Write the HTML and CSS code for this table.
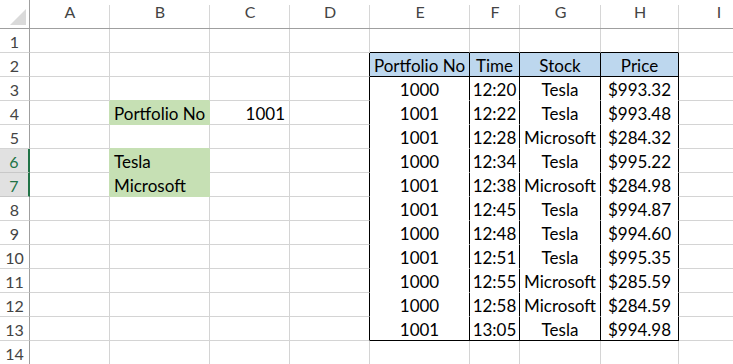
FILE: index.html
```html
<!DOCTYPE html>
<html>
<head>
<meta charset="utf-8">
<link rel="stylesheet" href="styles.css">
</head>
<body>
<div class="sheet">
  <div class="ch corner"><span class="tri"></span></div>
  <div class="ch">A</div><div class="ch">B</div><div class="ch">C</div><div class="ch">D</div><div class="ch">E</div><div class="ch">F</div><div class="ch">G</div><div class="ch">H</div><div class="ch">I</div>

  <div class="rh">1</div>
  <div class="c"></div><div class="c"></div><div class="c"></div><div class="c"></div><div class="c tb"></div><div class="c tb"></div><div class="c tb"></div><div class="c tb"></div><div class="c"></div>

  <div class="rh">2</div>
  <div class="c"></div><div class="c"></div><div class="c"></div><div class="c tl"></div><div class="c th">Portfolio No</div><div class="c th">Time</div><div class="c th">Stock</div><div class="c th">Price</div><div class="c"></div>

  <div class="rh">3</div>
  <div class="c"></div><div class="c gb"></div><div class="c"></div><div class="c tl"></div><div class="c td">1000</div><div class="c td">12:20</div><div class="c td">Tesla</div><div class="c td">$993.32</div><div class="c"></div>

  <div class="rh">4</div>
  <div class="c gr"></div><div class="c g">Portfolio No</div><div class="c num">1001</div><div class="c tl"></div><div class="c td">1001</div><div class="c td">12:22</div><div class="c td">Tesla</div><div class="c td">$993.48</div><div class="c"></div>

  <div class="rh">5</div>
  <div class="c"></div><div class="c gb"></div><div class="c"></div><div class="c tl"></div><div class="c td">1001</div><div class="c td">12:28</div><div class="c td">Microsoft</div><div class="c td">$284.32</div><div class="c"></div>

  <div class="rh sel">6</div>
  <div class="c gr"></div><div class="c g">Tesla</div><div class="c"></div><div class="c tl"></div><div class="c td">1000</div><div class="c td">12:34</div><div class="c td">Tesla</div><div class="c td">$995.22</div><div class="c"></div>

  <div class="rh sel">7</div>
  <div class="c gr"></div><div class="c g">Microsoft</div><div class="c"></div><div class="c tl"></div><div class="c td">1001</div><div class="c td">12:38</div><div class="c td">Microsoft</div><div class="c td">$284.98</div><div class="c"></div>

  <div class="rh">8</div>
  <div class="c"></div><div class="c"></div><div class="c"></div><div class="c tl"></div><div class="c td">1001</div><div class="c td">12:45</div><div class="c td">Tesla</div><div class="c td">$994.87</div><div class="c"></div>

  <div class="rh">9</div>
  <div class="c"></div><div class="c"></div><div class="c"></div><div class="c tl"></div><div class="c td">1000</div><div class="c td">12:48</div><div class="c td">Tesla</div><div class="c td">$994.60</div><div class="c"></div>

  <div class="rh">10</div>
  <div class="c"></div><div class="c"></div><div class="c"></div><div class="c tl"></div><div class="c td">1001</div><div class="c td">12:51</div><div class="c td">Tesla</div><div class="c td">$995.35</div><div class="c"></div>

  <div class="rh">11</div>
  <div class="c"></div><div class="c"></div><div class="c"></div><div class="c tl"></div><div class="c td">1000</div><div class="c td">12:55</div><div class="c td">Microsoft</div><div class="c td">$285.59</div><div class="c"></div>

  <div class="rh">12</div>
  <div class="c"></div><div class="c"></div><div class="c"></div><div class="c tl"></div><div class="c td">1000</div><div class="c td">12:58</div><div class="c td">Microsoft</div><div class="c td">$284.59</div><div class="c"></div>

  <div class="rh">13</div>
  <div class="c"></div><div class="c"></div><div class="c"></div><div class="c tl"></div><div class="c td last">1001</div><div class="c td last">13:05</div><div class="c td last">Tesla</div><div class="c td last">$994.98</div><div class="c"></div>

  <div class="rh">14</div>
  <div class="c"></div><div class="c"></div><div class="c"></div><div class="c"></div><div class="c"></div><div class="c"></div><div class="c"></div><div class="c"></div><div class="c"></div>
</div>
</body>
</html>
```

FILE: styles.css
```css
html, body {
  margin: 0;
  padding: 0;
  background: #ffffff;
  overflow: hidden;
}

.sheet {
  display: grid;
  grid-template-columns: 30px 80px 100px 80px 80px 100px 50px 81px 78px 80px;
  grid-template-rows: 29px repeat(14, 24px);
  width: 759px;
  font-family: "Lato", "Liberation Sans", sans-serif;
  font-size: 17px;
  color: #000000;
}

.ch {
  box-sizing: border-box;
  border-bottom: 1px solid #9f9f9f;
  background: linear-gradient(#d6d6d6, #d6d6d6) right bottom / 1px 23px no-repeat;
  color: #444444;
  font-size: 16px;
  text-align: center;
  line-height: 23px;
}

.corner {
  border-right: 1px solid #9f9f9f;
  background: #ffffff;
  display: flex;
  align-items: flex-end;
  justify-content: flex-end;
  padding: 0 3px 3px 0;
}

.tri {
  width: 16px;
  height: 16px;
  background: #dadada;
  clip-path: polygon(100% 0, 100% 100%, 0 100%);
}

.rh {
  box-sizing: border-box;
  border-right: 1px solid #9f9f9f;
  border-bottom: 1px solid #d4d4d4;
  color: #444444;
  font-size: 16px;
  text-align: center;
  line-height: 25px;
}

.rh.sel {
  background: #e1e1e1;
  color: #217346;
  border-right: 2px solid #217346;
  border-bottom-color: #c8c8c8;
}

.c {
  box-sizing: border-box;
  border-right: 1px solid #d4d4d4;
  border-bottom: 1px solid #d4d4d4;
  line-height: 25px;
  padding: 0 4px;
  white-space: nowrap;
  overflow: hidden;
}

.tb { border-bottom-color: #000000; }
.tl { border-right-color: #000000; }

.th {
  background: #bdd7ee;
  border-right-color: #000000;
  border-bottom-color: #000000;
  text-align: center;
  padding: 0;
}

.td {
  border-right-color: #000000;
  border-bottom-color: #ffffff;
  text-align: center;
  padding: 0;
}

.td.last { border-bottom-color: #000000; }

.g {
  background: #c6e0b4;
  border-right-color: #c6e0b4;
  border-bottom-color: #c6e0b4;
}

.gr { border-right-color: #c6e0b4; }
.gb { border-bottom-color: #c6e0b4; }

.num {
  text-align: right;
  padding-right: 4px;
}
```
